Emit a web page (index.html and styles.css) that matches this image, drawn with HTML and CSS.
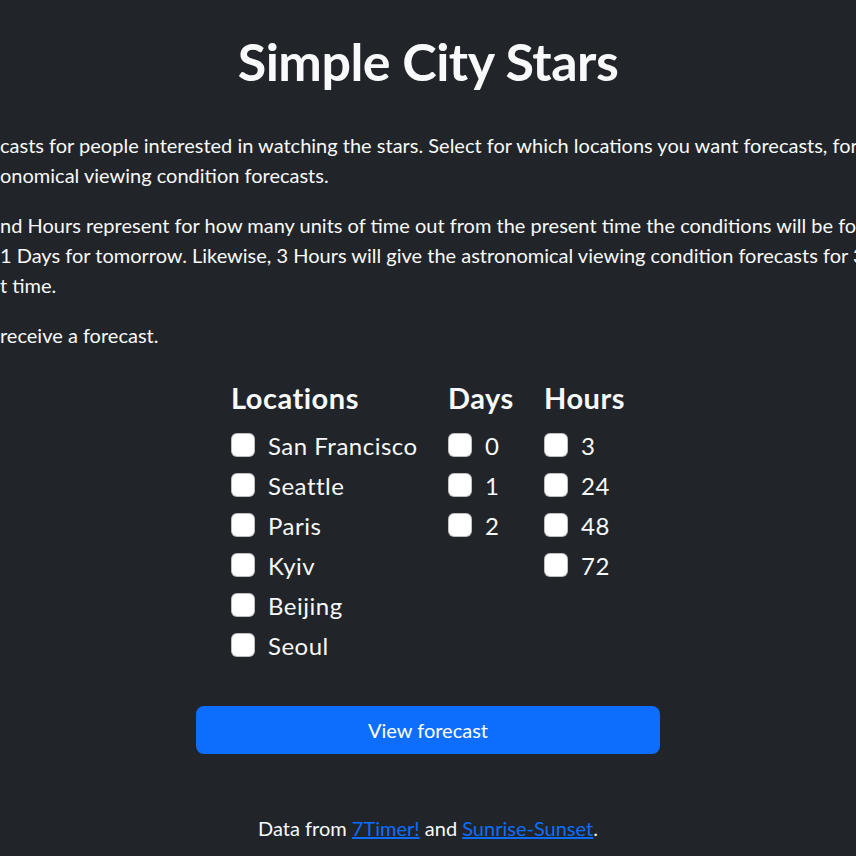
FILE: index.html
```html
<!DOCTYPE html>
<html lang="en">
<head>
<meta charset="utf-8">
<title>Simple City Stars</title>
<link rel="stylesheet" href="styles.css">
</head>
<body>
<main class="page">
  <h1 class="title">Simple City Stars</h1>
  <div class="intro">
    <p>casts for people interested in watching the stars. Select for which locations you want forecasts, for how<br>onomical viewing condition forecasts.</p>
    <p>nd Hours represent for how many units of time out from the present time the conditions will be for<br>1 Days for tomorrow. Likewise, 3 Hours will give the astronomical viewing condition forecasts for 3<br>t time.</p>
    <p>receive a forecast.</p>
  </div>
  <form class="picker">
    <div class="group">
      <h3 class="group-title">Locations</h3>
      <label class="check"><input type="checkbox"><span>San Francisco</span></label>
      <label class="check"><input type="checkbox"><span>Seattle</span></label>
      <label class="check"><input type="checkbox"><span>Paris</span></label>
      <label class="check"><input type="checkbox"><span>Kyiv</span></label>
      <label class="check"><input type="checkbox"><span>Beijing</span></label>
      <label class="check"><input type="checkbox"><span>Seoul</span></label>
    </div>
    <div class="group">
      <h3 class="group-title">Days</h3>
      <label class="check"><input type="checkbox"><span>0</span></label>
      <label class="check"><input type="checkbox"><span>1</span></label>
      <label class="check"><input type="checkbox"><span>2</span></label>
    </div>
    <div class="group">
      <h3 class="group-title">Hours</h3>
      <label class="check"><input type="checkbox"><span>3</span></label>
      <label class="check"><input type="checkbox"><span>24</span></label>
      <label class="check"><input type="checkbox"><span>48</span></label>
      <label class="check"><input type="checkbox"><span>72</span></label>
    </div>
  </form>
  <button class="submit" type="button">View forecast</button>
  <p class="credits">Data from <a href="#">7Timer!</a> and <a href="#">Sunrise-Sunset</a>.</p>
</main>
</body>
</html>
```
FILE: styles.css
```css
html, body {
  margin: 0;
  padding: 0;
  background: #212529;
  overflow: hidden;
}
body {
  color: #f8f9fa;
  font-family: Lato, "Liberation Sans", sans-serif;
  font-size: 20px;
  line-height: 1.5;
  width: 856px;
  height: 856px;
}
.page {
  display: flex;
  flex-direction: column;
  align-items: center;
  padding-top: 30px;
}
.title {
  margin: 0 0 37.6px;
  font-size: 52px;
  font-weight: 700;
  letter-spacing: -0.5px;
  line-height: 1.2;
}
.intro {
  align-self: stretch;
  white-space: nowrap;
  overflow: hidden;
}
.intro p {
  margin: 0 0 20px;
}
.intro p:last-child {
  margin-bottom: 0;
}
.picker {
  display: grid;
  grid-template-columns: 185px 64px 81px;
  column-gap: 32px;
  margin-top: 31.5px;
  white-space: nowrap;
}
.group {
  display: flex;
  flex-direction: column;
}
.group-title {
  margin: 0 0 12px;
  font-size: 29px;
  font-weight: 700;
  letter-spacing: 0.5px;
  line-height: 1.2;
}
.check {
  display: flex;
  align-items: flex-start;
  font-size: 24px;
  letter-spacing: 0.5px;
  line-height: 36px;
  margin-bottom: 4px;
}
.check input {
  appearance: none;
  -webkit-appearance: none;
  width: 24px;
  height: 24px;
  margin: 5px 13px 0 0;
  flex: none;
  background: #fff;
  border: 1px solid rgba(0, 0, 0, 0.25);
  border-radius: 6px;
}
.submit {
  margin-top: 38px;
  width: 464px;
  height: 48px;
  border: 0;
  border-radius: 8px;
  background: #0d6efd;
  color: #fff;
  font-family: inherit;
  font-size: 20px;
  line-height: 30px;
  padding: 8px 16px;
}
.credits {
  margin: 59px 0 0;
}
.credits a {
  color: #0d6efd;
  text-decoration: underline;
}
```
